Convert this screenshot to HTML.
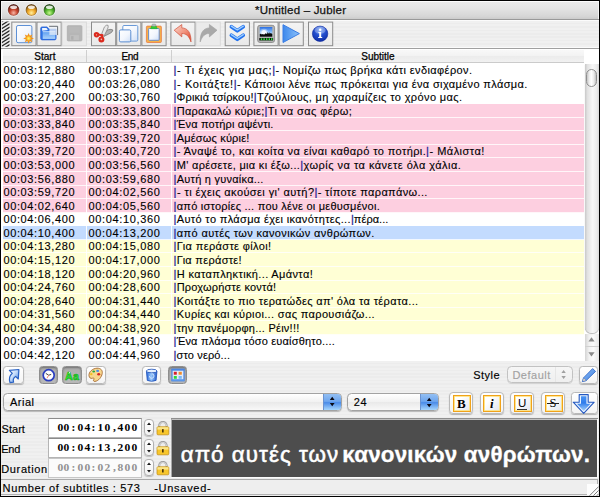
<!DOCTYPE html>
<html>
<head>
<meta charset="utf-8">
<title>Jubler</title>
<style>
html,body{margin:0;padding:0;}
body{width:600px;height:497px;background:#000;overflow:hidden;position:relative;font-family:"Liberation Sans",sans-serif;font-size:11px;color:#000;}
.abs{position:absolute;}
#title{position:absolute;left:1px;top:1.2px;width:598px;height:17.6px;background:linear-gradient(#ebebeb,#e4e4e4 40%,#d6d6d6 85%,#cbcbcb);box-shadow:inset 0 1px 0 #fcfcfc, inset 1px 0 0 #f4f4f4, inset -1px 0 0 #f4f4f4;}
#title .t{position:absolute;left:0.6px;width:598px;top:2.5px;text-align:center;font-size:11.5px;letter-spacing:0.2px;color:#111;-webkit-text-stroke:0.25px #111;}
.tl{position:absolute;top:4.3px;width:11.4px;height:11.4px;border-radius:50%;}
#tbline{position:absolute;left:1px;top:18.6px;width:598px;height:1.2px;background:#999999;}
#toolbar{position:absolute;left:1px;top:20px;width:598px;height:28px;background:repeating-linear-gradient(#f0f0f0 0,#f0f0f0 1.7px,#ececec 1.7px,#ececec 3.4px);border-top:1px solid #fbfbfb;border-bottom:1px solid #fbfbfb;box-sizing:border-box;}
#tbline2{position:absolute;left:1px;top:48px;width:598px;height:1.3px;background:#a0a0a0;}
.tb{position:absolute;top:21.5px;width:24.2px;height:24px;box-sizing:border-box;border:1px solid #8e8e8e;background:linear-gradient(#f6f6f6,#ececec);}
.tb.dis{border-color:#dadada;background:#ececec;}
.tb svg{position:absolute;left:0;top:0;}
#hdr{position:absolute;left:2.8px;top:50.3px;width:581.2px;height:13px;background:linear-gradient(#f8f8f8,#f3f3f3 48%,#ececec 54%,#f1f1f1);border-bottom:1px solid #cbcbcb;box-sizing:border-box;}
#hdr span{-webkit-text-stroke:0.25px #000;position:absolute;top:0.6px;font-size:10px;text-align:center;line-height:12px;}
.hsep{position:absolute;top:50px;width:1px;height:12px;background:#cfcfcf;}
#tablebg{position:absolute;left:1px;top:49px;width:598px;height:311.8px;background:#fff;}
.row{-webkit-text-stroke:0.12px #000;position:absolute;left:2.8px;width:581.2px;box-sizing:border-box;border-bottom:1px solid rgba(255,255,255,.8);font-size:11px;line-height:13px;white-space:nowrap;overflow:hidden;}
.row span.c1,.row span.c2,.row span.c3{position:absolute;top:0.5px;}
.row .c1{left:0.6px;}
.row .c2{left:85.8px;}
.row .c3{left:170.8px;}
.pp{color:#2a2a98;-webkit-text-stroke:0.3px #2a2a98;}
.vsep{position:absolute;top:63.5px;width:1px;height:297.3px;background:#fff;opacity:.9;}
#sb{position:absolute;left:585px;top:63.5px;width:13.6px;height:297px;}
#lower{position:absolute;left:1px;top:360.8px;width:598px;height:118px;background:repeating-linear-gradient(#f0f0f0 0,#f0f0f0 1.7px,#ececec 1.7px,#ececec 3.4px);}
.sbtn{position:absolute;top:366.4px;height:18px;box-sizing:border-box;border:1px solid #b9b9b9;border-radius:3.5px;background:linear-gradient(#ffffff,#f4f4f4);box-shadow:0 1px 1px rgba(0,0,0,.25);}
.sbtn.on{background:linear-gradient(#adadad,#bababa);border-color:#8e8e8e;box-shadow:0 1px 0 rgba(255,255,255,.6), inset 0 1px 2px rgba(0,0,0,.35);}
.sbtn svg{position:absolute;left:-1px;top:-1px;}
.combo{position:absolute;box-sizing:border-box;border:1px solid #a2a2a2;border-radius:4.5px;background:linear-gradient(#ffffff,#f1f1f1 50%,#e9e9e9 52%,#f8f8f8);box-shadow:0 1px 1px rgba(0,0,0,.22);overflow:hidden;}
.combo .lab{position:absolute;left:5.6px;top:1.2px;font-size:11px;letter-spacing:0.5px;line-height:14px;-webkit-text-stroke:0.15px #000;}
.combo .cap{position:absolute;right:0;top:0;bottom:0;width:17px;background:linear-gradient(#93bff3,#6ea6ee 46%,#4a8be8 54%,#a6d6fd);border-left:1px solid #6a92d0;}
.combo .cap.g{background:transparent;border-left:1px solid #e6e6e6;}
.fld{position:absolute;left:47.6px;width:94.2px;height:20.1px;box-sizing:border-box;border:1px solid #b4b4b4;border-top-color:#8b8b8b;background:#fff;font-family:"Liberation Serif",serif;font-weight:bold;font-size:10.2px;line-height:18.4px;text-align:right;padding-right:3.1px;white-space:nowrap;}
.mc{display:inline-block;width:6.76px;text-align:center;transform:scaleX(1.13);}
.lbl{position:absolute;left:0.8px;font-size:11px;line-height:13px;-webkit-text-stroke:0.15px #000;}
#prev{position:absolute;left:172.3px;top:420.3px;width:424.6px;height:56.4px;background:#4d4d4d;}
#prevb{position:absolute;left:170.8px;top:418.2px;width:427px;height:60.3px;background:#fafafa;}
#prevb i{position:absolute;display:block;}
#prev .tx{position:absolute;left:8.4px;top:21.4px;color:#fff;font-size:22.4px;line-height:26px;white-space:nowrap;-webkit-text-stroke:0.3px #fff;}
#status{position:absolute;left:1px;top:478.8px;width:597px;height:16.2px;background:#eeeeee;border-top:1px solid #a9a9a9;border-bottom:1px solid #b2b2b2;border-right:1px solid #b0b0b0;box-sizing:border-box;}
#status span{position:absolute;top:2.4px;font-size:11px;line-height:13px;white-space:nowrap;-webkit-text-stroke:0.15px #000;}
#grip{position:absolute;left:586.6px;top:483.6px;width:11.6px;height:11.6px;background:#fdfdfd;}
</style>
</head>
<body>
<div id="winbg" class="abs" style="left:1px;top:1px;width:598px;height:495px;background:#ececec;"></div>
<div id="title">
<svg class="abs" style="left:0;top:0" width="70" height="18" viewBox="0 0 70 18"><defs><radialGradient id="tl0" cx="0.5" cy="0.78" r="0.75"><stop offset="0" stop-color="#f8b8a8"/><stop offset="0.5" stop-color="#c8452e"/><stop offset="1" stop-color="#6a1c10"/></radialGradient>
<linearGradient id="tr0" x1="0" y1="0" x2="0" y2="1"><stop offset="0" stop-color="#4a1a14"/><stop offset="1" stop-color="#b86a5a"/></linearGradient></defs>
<circle cx="12.6" cy="9.0" r="5.9" fill="url(#tr0)"/><circle cx="12.6" cy="9.2" r="4.9" fill="url(#tl0)"/>
<ellipse cx="12.6" cy="6.3" rx="3.5" ry="1.8" fill="#fff" fill-opacity="0.82"/>
<circle cx="12.6" cy="9.0" r="6.3" fill="none" stroke="#fff" stroke-opacity="0.55" stroke-width="0.8"/><defs><radialGradient id="tl1" cx="0.5" cy="0.78" r="0.75"><stop offset="0" stop-color="#fff0a0"/><stop offset="0.5" stop-color="#f0a828"/><stop offset="1" stop-color="#8a5a10"/></radialGradient>
<linearGradient id="tr1" x1="0" y1="0" x2="0" y2="1"><stop offset="0" stop-color="#5a3a14"/><stop offset="1" stop-color="#c09040"/></linearGradient></defs>
<circle cx="30.4" cy="9.0" r="5.9" fill="url(#tr1)"/><circle cx="30.4" cy="9.2" r="4.9" fill="url(#tl1)"/>
<ellipse cx="30.4" cy="6.3" rx="3.5" ry="1.8" fill="#fff" fill-opacity="0.82"/>
<circle cx="30.4" cy="9.0" r="6.3" fill="none" stroke="#fff" stroke-opacity="0.55" stroke-width="0.8"/><defs><radialGradient id="tl2" cx="0.5" cy="0.78" r="0.75"><stop offset="0" stop-color="#c8f890"/><stop offset="0.5" stop-color="#58b830"/><stop offset="1" stop-color="#1e5a14"/></radialGradient>
<linearGradient id="tr2" x1="0" y1="0" x2="0" y2="1"><stop offset="0" stop-color="#23401a"/><stop offset="1" stop-color="#6aa850"/></linearGradient></defs>
<circle cx="48.4" cy="9.0" r="5.9" fill="url(#tr2)"/><circle cx="48.4" cy="9.2" r="4.9" fill="url(#tl2)"/>
<ellipse cx="48.4" cy="6.3" rx="3.5" ry="1.8" fill="#fff" fill-opacity="0.82"/>
<circle cx="48.4" cy="9.0" r="6.3" fill="none" stroke="#fff" stroke-opacity="0.55" stroke-width="0.8"/></svg>
  <div class="t">*Untitled – Jubler</div>
</div>
<div id="tbline"></div>
<div id="toolbar"></div>
<div id="tbline2"></div>
<svg class="abs" style="left:0;top:19px" width="600" height="30" viewBox="0 0 600 30">
<defs>
<linearGradient id="btn" x1="0" y1="0" x2="0" y2="1"><stop offset="0" stop-color="#f4f4f4"/><stop offset="1" stop-color="#e9e9e9"/></linearGradient>
<linearGradient id="pg" x1="0" y1="0" x2="1" y2="1"><stop offset="0" stop-color="#ffffff"/><stop offset="0.55" stop-color="#f2f6fd"/><stop offset="1" stop-color="#cfdff6"/></linearGradient>
<linearGradient id="fold" x1="0" y1="0" x2="0" y2="1"><stop offset="0" stop-color="#5a9cf0"/><stop offset="1" stop-color="#acd3fb"/></linearGradient>
<linearGradient id="undo" x1="0" y1="0" x2="1" y2="1"><stop offset="0" stop-color="#fbd9cf"/><stop offset="0.55" stop-color="#f08e78"/><stop offset="1" stop-color="#dc3c22"/></linearGradient>
<linearGradient id="chev" x1="0" y1="0" x2="0" y2="1"><stop offset="0" stop-color="#7fbcff"/><stop offset="0.5" stop-color="#2a78f0"/><stop offset="1" stop-color="#1a5fe0"/></linearGradient>
<linearGradient id="play" x1="0" y1="0" x2="1" y2="0"><stop offset="0" stop-color="#3d88ec"/><stop offset="1" stop-color="#8cc2fa"/></linearGradient>
<linearGradient id="sky" x1="0" y1="0" x2="0" y2="1"><stop offset="0" stop-color="#2a6ee4"/><stop offset="0.55" stop-color="#8cc2f8"/><stop offset="1" stop-color="#f4faff"/></linearGradient>
<radialGradient id="info" cx="0.5" cy="0.25" r="0.8"><stop offset="0" stop-color="#7aa6f6"/><stop offset="0.45" stop-color="#2450d0"/><stop offset="1" stop-color="#0c2aa0"/></radialGradient>
<radialGradient id="sun" cx="0.5" cy="0.5" r="0.5"><stop offset="0" stop-color="#fff27a"/><stop offset="0.5" stop-color="#ffd23a"/><stop offset="1" stop-color="#f08a18"/></radialGradient>
</defs>
<clipPath id="hc"><rect x="1.8" y="2.4" width="7.8" height="25.4"/></clipPath><g stroke="#2a2a2a" stroke-width="1.35" clip-path="url(#hc)">
<path d="M1.6 2.70 L9.8 -2.50"/>
<path d="M1.6 6.20 L9.8 1.00"/>
<path d="M1.6 9.70 L9.8 4.50"/>
<path d="M1.6 13.20 L9.8 8.00"/>
<path d="M1.6 16.70 L9.8 11.50"/>
<path d="M1.6 20.20 L9.8 15.00"/>
<path d="M1.6 23.70 L9.8 18.50"/>
<path d="M1.6 27.20 L9.8 22.00"/>
<path d="M1.6 30.70 L9.8 25.50"/>
<path d="M1.6 34.20 L9.8 29.00"/>
</g>

<rect x="11.8" y="3.1000000000000014" width="24.2" height="23.6" fill="url(#btn)" stroke="#8b8b8b" stroke-width="1"/>
<g transform="translate(11.3,2.5000000000000013)"><rect x="5.2" y="4" width="15.4" height="17.2" rx="1.6" fill="url(#pg)" stroke="#5d90d6" stroke-width="1"/>
<g transform="translate(17.3,16.9) scale(1.12)"><path d="M0 -4.8 L1 -2.4 L3.4 -3.4 L2.4 -1 L4.8 0 L2.4 1 L3.4 3.4 L1 2.4 L0 4.8 L-1 2.4 L-3.4 3.4 L-2.4 1 L-4.8 0 L-2.4 -1 L-3.4 -3.4 L-1 -2.4Z" fill="#f3961c"/><circle r="2.5" fill="url(#sun)"/></g></g>
<rect x="37.0" y="3.1000000000000014" width="24.2" height="23.6" fill="url(#btn)" stroke="#8b8b8b" stroke-width="1"/>
<g transform="translate(36.5,2.5000000000000013)"><path d="M4.2 6.8 Q4.2 5.4 5.6 5.4 L10.6 5.4 L12.4 7.6 L19.6 7.6 L19.6 17 Q19.6 18.4 18.2 18.4 L5.6 18.4 Q4.2 18.4 4.2 17Z" fill="#2f74e6" stroke="#2a62d4" stroke-width="0.7"/>
<path d="M5.6 6.6 L10 6.6 L11.4 8.6 L5.6 9.2Z" fill="#eef5ff"/>
<path d="M6.2 9.9 L18.8 9.9 L18.8 17.4 L6.2 17.4Z" fill="url(#fold)"/>
<path d="M6.2 10.2 L18.8 10.2" stroke="#d8eafd" stroke-width="0.8"/>
<rect x="12.9" y="4.9" width="8" height="8.5" fill="#eef2f8" fill-opacity="0.72"/><path d="M12.6 4.8 L21.1 4.8 L21.1 13.6" stroke="#585e66" stroke-width="0.9" fill="none"/></g>
<rect x="62.2" y="3.1000000000000014" width="24.2" height="23.6" fill="#ebebeb" stroke="#dadada" stroke-width="1"/>
<g transform="translate(61.7,2.5000000000000013)"><rect x="5.6" y="4.2" width="14.6" height="15.2" rx="0.8" fill="#b6b6b6" stroke="#adadad" stroke-width="0.8"/><rect x="8.4" y="13.6" width="8.8" height="5" fill="#c0c0c0"/><rect x="9.4" y="14.6" width="2.4" height="3.6" fill="#b0b0b0"/><rect x="7.6" y="5.2" width="10.6" height="6" fill="#b9b9b9"/></g>
<rect x="91.5" y="3.1000000000000014" width="24.2" height="23.6" fill="url(#btn)" stroke="#8b8b8b" stroke-width="1"/>
<g transform="translate(91.0,2.5000000000000013)"><path d="M11.4 12.2 L17.4 8.2 Q20.2 7.4 21.9 8.5 Q21.5 10.8 19 11.9 L12.6 15 Z" fill="#b2b2b2" stroke="#6e6e6e" stroke-width="0.7" stroke-linejoin="round"/>
<path d="M10 14.4 L13.3 5.6 Q15.2 2.9 17 3.7 Q17.7 5.4 16.5 7.5 L12.6 15.6 Z" fill="#e9e9e9" stroke="#7c7c7c" stroke-width="0.7" stroke-linejoin="round"/>
<path d="M7 12.9 L11.4 13.8 M10.7 16 L11.6 13.6" stroke="#dc2a1e" stroke-width="2" stroke-linecap="round"/>
<circle cx="5.5" cy="13.3" r="1.7" fill="#e9c4b6" stroke="#dc2a1e" stroke-width="2.1"/>
<circle cx="10.4" cy="17.9" r="1.9" fill="#e9c4b6" stroke="#dc2a1e" stroke-width="2.2"/></g>
<rect x="116.7" y="3.1000000000000014" width="24.2" height="23.6" fill="url(#btn)" stroke="#8b8b8b" stroke-width="1"/>
<g transform="translate(116.2,2.5000000000000013)"><rect x="6.6" y="4" width="15" height="15.6" rx="1.2" fill="url(#pg)" stroke="#6a9ad8" stroke-width="1"/>
<rect x="3.2" y="8.4" width="11.4" height="12" rx="1.4" fill="url(#pg)" stroke="#5a8cd0" stroke-width="1"/></g>
<rect x="141.9" y="3.1000000000000014" width="24.2" height="23.6" fill="url(#btn)" stroke="#8b8b8b" stroke-width="1"/>
<g transform="translate(141.4,2.5000000000000013)"><rect x="5" y="4.6" width="15" height="16.4" rx="1" fill="#f5b24a" stroke="#e8703a" stroke-width="0.7"/>
<rect x="7.2" y="7" width="10.6" height="11.8" rx="0.8" fill="url(#pg)" stroke="#5a86d0" stroke-width="0.9"/>
<path d="M9.2 7.2 L10.2 4.6 L14.8 4.6 L15.8 7.2Z" fill="#2fd030" stroke="#1ea824" stroke-width="0.5"/>
<rect x="10.6" y="2.6" width="3.8" height="2.2" rx="0.8" fill="#b8c0c0" stroke="#8a9090" stroke-width="0.5"/></g>
<rect x="170.9" y="3.1000000000000014" width="24.2" height="23.6" fill="url(#btn)" stroke="#8b8b8b" stroke-width="1"/>
<g transform="translate(170.4,2.5000000000000013)"><path d="M3.8 8.7 L11.4 3 L11.4 6.4 C17 6.6 20.8 10.6 20.6 20.4 C18.6 14.6 16 12 11.4 12 L11.4 15.4Z" fill="url(#undo)" stroke="#d0503a" stroke-width="0.7" stroke-linejoin="round"/></g>
<rect x="196.1" y="3.1000000000000014" width="24.2" height="23.6" fill="#ebebeb" stroke="#dadada" stroke-width="1"/>
<g transform="translate(195.6,2.5000000000000013)"><path d="M21.4 8.7 L13.8 3 L13.8 6.4 C8.2 6.6 4.4 10.6 4.6 20.4 C6.6 14.6 9.2 12 13.8 12 L13.8 15.4Z" fill="#a9a9a9" stroke="#a0a0a0" stroke-width="0.6" stroke-linejoin="round"/></g>
<rect x="225.2" y="3.1000000000000014" width="24.2" height="23.6" fill="url(#btn)" stroke="#8b8b8b" stroke-width="1"/>
<g transform="translate(224.7,2.5000000000000013)"><path d="M6.7 5.3 L12.6 9.3 L18.5 5.3" stroke="#2472ee" stroke-width="3.7" fill="none" stroke-linecap="round" stroke-linejoin="round"/>
<path d="M6.7 13.8 L12.6 17.8 L18.5 13.8" stroke="#2472ee" stroke-width="3.7" fill="none" stroke-linecap="round" stroke-linejoin="round"/>
<path d="M6.6 4.6 L12.6 8.5 L18.6 4.6" stroke="#9fd0ff" stroke-width="1.3" fill="none" stroke-linecap="round" stroke-linejoin="round"/>
<path d="M6.6 13.1 L12.6 17 L18.6 13.1" stroke="#9fd0ff" stroke-width="1.3" fill="none" stroke-linecap="round" stroke-linejoin="round"/></g>
<rect x="253.9" y="3.1000000000000014" width="24.2" height="23.6" fill="url(#btn)" stroke="#8b8b8b" stroke-width="1"/>
<g transform="translate(253.4,2.5000000000000013)"><rect x="4.2" y="3.8" width="17" height="17.2" rx="2.4" fill="#b4b4b4" stroke="#8a8a8a" stroke-width="0.9"/>
<rect x="6.4" y="5.5" width="12.5" height="9.7" fill="url(#sky)"/>
<circle cx="10.6" cy="11.2" r="2.6" fill="#ffffff" fill-opacity="0.85"/><circle cx="10.6" cy="11.2" r="4" fill="#ffffff" fill-opacity="0.35"/>
<path d="M6.4 15.2 L6.4 12.6 L7.6 12.2 L8.4 12.9 L9.4 12.4 L10.4 13.1 L11.4 12.7 L12 11.4 L12.6 12.6 L13.4 12.2 L13.9 10.2 L14.4 12.2 L15.2 11.8 L15.9 10.8 L16.4 12.2 L17.4 11.6 L18.9 12.4 L18.9 15.2Z" fill="#0a0a0a"/>
<rect x="5.9" y="16.4" width="13.8" height="2.7" rx="0.6" fill="#121212"/>
<path d="M7.4 17.75 h1.4 M10 17.75 h1.4 M12.6 17.75 h1.4 M15.2 17.75 h1.4 M17.6 17.75 h1.4" stroke="#30e83c" stroke-width="2"/></g>
<rect x="279.1" y="3.1000000000000014" width="24.2" height="23.6" fill="url(#btn)" stroke="#8b8b8b" stroke-width="1"/>
<g transform="translate(278.6,2.5000000000000013)"><path d="M4.4 3.2 L4.4 21 L20.8 12.1Z" fill="url(#play)" stroke="#3a7de4" stroke-width="1" stroke-linejoin="round"/></g>
<rect x="308.5" y="3.1000000000000014" width="24.2" height="23.6" fill="url(#btn)" stroke="#8b8b8b" stroke-width="1"/>
<g transform="translate(308.0,2.5000000000000013)"><circle cx="12.1" cy="12.3" r="7.7" fill="url(#info)" stroke="#0a279c" stroke-width="0.6"/>
<ellipse cx="12.1" cy="8.6" rx="5.6" ry="3.6" fill="#ffffff" fill-opacity="0.28"/>
<circle cx="12.2" cy="8.2" r="1.25" fill="#fff"/><path d="M10.4 10.6 L13.2 10.6 L13.2 15.6 L14.2 15.6 L14.2 16.6 L10.2 16.6 L10.2 15.6 L11.2 15.6 L11.2 11.6 L10.4 11.6Z" fill="#fff"/></g>
</svg>
<div id="tablebg"></div>
<div id="hdr">
  <span style="left:-0.4px;width:85px;">Start</span>
  <span style="left:84.6px;width:85px;letter-spacing:-0.4px;">End</span>
  <span style="left:169.2px;width:412px;">Subtitle</span>
</div>
<div class="hsep" style="left:86px;"></div>
<div class="hsep" style="left:171px;"></div>
<div class="row" style="top:63.50px;height:13.57px;background:#ffffff"><span class="c1" style="letter-spacing:0.633px">00:03:12,880</span><span class="c2" style="letter-spacing:0.633px">00:03:17,200</span><span class="c3"><span class="sa" style="letter-spacing:0.630px"><span class="pp">|</span>- Τι έχεις για μας;</span><span class="sb" style="letter-spacing:0.397px"><span class="pp">|</span>- Νομίζω πως βρήκα κάτι ενδιαφέρον.</span></span></div>
<div class="row" style="top:77.07px;height:13.57px;background:#ffffff"><span class="c1" style="letter-spacing:0.633px">00:03:20,440</span><span class="c2" style="letter-spacing:0.633px">00:03:26,080</span><span class="c3"><span class="sa" style="letter-spacing:0.581px"><span class="pp">|</span>- Κοιτάξτε!</span><span class="sb" style="letter-spacing:0.374px"><span class="pp">|</span>- Κάποιοι λένε πως πρόκειται για ένα σιχαμένο πλάσμα.</span></span></div>
<div class="row" style="top:90.64px;height:13.57px;background:#ffffff"><span class="c1" style="letter-spacing:0.633px">00:03:27,200</span><span class="c2" style="letter-spacing:0.633px">00:03:30,760</span><span class="c3"><span class="sa" style="letter-spacing:0.135px"><span class="pp">|</span>Φρικιά τσίρκου!</span><span class="sb" style="letter-spacing:0.380px"><span class="pp">|</span>Τζούλιους, μη χαραμίζεις το χρόνο μας.</span></span></div>
<div class="row" style="top:104.21px;height:13.57px;background:#fdcfe0"><span class="c1" style="letter-spacing:0.633px">00:03:31,840</span><span class="c2" style="letter-spacing:0.633px">00:03:33,800</span><span class="c3"><span class="sa" style="letter-spacing:0.264px"><span class="pp">|</span>Παρακαλώ κύριε;</span><span class="sb" style="letter-spacing:0.418px"><span class="pp">|</span>Τι να σας φέρω;</span></span></div>
<div class="row" style="top:117.78px;height:13.57px;background:#fdcfe0"><span class="c1" style="letter-spacing:0.633px">00:03:33,840</span><span class="c2" style="letter-spacing:0.633px">00:03:35,840</span><span class="c3"><span class="sa" style="letter-spacing:0.185px"><span class="pp">|</span>Ένα ποτήρι αψέντι.</span></span></div>
<div class="row" style="top:131.35px;height:13.57px;background:#fdcfe0"><span class="c1" style="letter-spacing:0.633px">00:03:35,880</span><span class="c2" style="letter-spacing:0.633px">00:03:39,720</span><span class="c3"><span class="sa" style="letter-spacing:0.180px"><span class="pp">|</span>Αμέσως κύριε!</span></span></div>
<div class="row" style="top:144.92px;height:13.57px;background:#fdcfe0"><span class="c1" style="letter-spacing:0.633px">00:03:39,720</span><span class="c2" style="letter-spacing:0.633px">00:03:40,720</span><span class="c3"><span class="sa" style="letter-spacing:0.394px"><span class="pp">|</span>- Άναψέ το, και κοίτα να είναι καθαρό το ποτήρι.</span><span class="sb" style="letter-spacing:0.485px"><span class="pp">|</span>- Μάλιστα!</span></span></div>
<div class="row" style="top:158.49px;height:13.57px;background:#fdcfe0"><span class="c1" style="letter-spacing:0.633px">00:03:53,000</span><span class="c2" style="letter-spacing:0.633px">00:03:56,560</span><span class="c3"><span class="sa" style="letter-spacing:0.310px"><span class="pp">|</span>Μ' αρέσετε, μια κι έξω...</span><span class="sb" style="letter-spacing:0.479px"><span class="pp">|</span>χωρίς να τα κάνετε όλα χάλια.</span></span></div>
<div class="row" style="top:172.06px;height:13.57px;background:#fdcfe0"><span class="c1" style="letter-spacing:0.633px">00:03:56,880</span><span class="c2" style="letter-spacing:0.633px">00:03:59,680</span><span class="c3"><span class="sa" style="letter-spacing:0.246px"><span class="pp">|</span>Αυτή η γυναίκα...</span></span></div>
<div class="row" style="top:185.63px;height:13.57px;background:#fdcfe0"><span class="c1" style="letter-spacing:0.633px">00:03:59,720</span><span class="c2" style="letter-spacing:0.633px">00:04:02,560</span><span class="c3"><span class="sa" style="letter-spacing:0.410px"><span class="pp">|</span>- τι έχεις ακούσει γι' αυτή?</span><span class="sb" style="letter-spacing:0.373px"><span class="pp">|</span>- τίποτε παραπάνω...</span></span></div>
<div class="row" style="top:199.20px;height:13.57px;background:#fdcfe0"><span class="c1" style="letter-spacing:0.633px">00:04:02,640</span><span class="c2" style="letter-spacing:0.633px">00:04:05,560</span><span class="c3"><span class="sa" style="letter-spacing:0.244px"><span class="pp">|</span>από ιστορίες ... που λένε οι μεθυσμένοι.</span></span></div>
<div class="row" style="top:212.77px;height:13.57px;background:#ffffff"><span class="c1" style="letter-spacing:0.633px">00:04:06,400</span><span class="c2" style="letter-spacing:0.633px">00:04:10,360</span><span class="c3"><span class="sa" style="letter-spacing:0.337px"><span class="pp">|</span>Αυτό το πλάσμα έχει ικανότητες...</span><span class="sb" style="letter-spacing:0.051px"><span class="pp">|</span>πέρα...</span></span></div>
<div class="row" style="top:226.34px;height:13.57px;background:#c3dbfe"><span class="c1" style="letter-spacing:0.633px">00:04:10,400</span><span class="c2" style="letter-spacing:0.633px">00:04:13,200</span><span class="c3"><span class="sa" style="letter-spacing:0.374px"><span class="pp">|</span>από αυτές των κανονικών ανθρώπων.</span></span></div>
<div class="row" style="top:239.91px;height:13.57px;background:#ffffd5"><span class="c1" style="letter-spacing:0.633px">00:04:13,280</span><span class="c2" style="letter-spacing:0.633px">00:04:15,080</span><span class="c3"><span class="sa" style="letter-spacing:0.359px"><span class="pp">|</span>Για περάστε φίλοι!</span></span></div>
<div class="row" style="top:253.48px;height:13.57px;background:#ffffd5"><span class="c1" style="letter-spacing:0.633px">00:04:15,120</span><span class="c2" style="letter-spacing:0.633px">00:04:17,000</span><span class="c3"><span class="sa" style="letter-spacing:0.290px"><span class="pp">|</span>Για περάστε!</span></span></div>
<div class="row" style="top:267.05px;height:13.57px;background:#ffffd5"><span class="c1" style="letter-spacing:0.633px">00:04:18,120</span><span class="c2" style="letter-spacing:0.633px">00:04:20,960</span><span class="c3"><span class="sa" style="letter-spacing:0.363px"><span class="pp">|</span>Η καταπληκτική... Αμάντα!</span></span></div>
<div class="row" style="top:280.62px;height:13.57px;background:#ffffd5"><span class="c1" style="letter-spacing:0.633px">00:04:24,760</span><span class="c2" style="letter-spacing:0.633px">00:04:28,600</span><span class="c3"><span class="sa" style="letter-spacing:0.205px"><span class="pp">|</span>Προχωρήστε κοντά!</span></span></div>
<div class="row" style="top:294.19px;height:13.57px;background:#ffffd5"><span class="c1" style="letter-spacing:0.633px">00:04:28,640</span><span class="c2" style="letter-spacing:0.633px">00:04:31,440</span><span class="c3"><span class="sa" style="letter-spacing:0.360px"><span class="pp">|</span>Κοιτάξτε το πιο τερατώδες απ' όλα τα τέρατα...</span></span></div>
<div class="row" style="top:307.76px;height:13.57px;background:#ffffd5"><span class="c1" style="letter-spacing:0.633px">00:04:31,560</span><span class="c2" style="letter-spacing:0.633px">00:04:34,440</span><span class="c3"><span class="sa" style="letter-spacing:0.356px"><span class="pp">|</span>Κυρίες και κύριοι... σας παρουσιάζω...</span></span></div>
<div class="row" style="top:321.33px;height:13.57px;background:#ffffd5"><span class="c1" style="letter-spacing:0.633px">00:04:34,480</span><span class="c2" style="letter-spacing:0.633px">00:04:38,920</span><span class="c3"><span class="sa" style="letter-spacing:0.253px"><span class="pp">|</span>την πανέμορφη... Ρέιν!!!</span></span></div>
<div class="row" style="top:334.90px;height:13.57px;background:#ffffff"><span class="c1" style="letter-spacing:0.633px">00:04:39,200</span><span class="c2" style="letter-spacing:0.633px">00:04:41,960</span><span class="c3"><span class="sa" style="letter-spacing:0.178px"><span class="pp">|</span>Ένα πλάσμα τόσο ευαίσθητο....</span></span></div>
<div class="row" style="top:348.47px;height:13.57px;background:#ffffff"><span class="c1" style="letter-spacing:0.633px">00:04:42,120</span><span class="c2" style="letter-spacing:0.633px">00:04:44,960</span><span class="c3"><span class="sa" style="letter-spacing:0.130px"><span class="pp">|</span>στο νερό...</span></span></div>
<div class="vsep" style="left:86px;"></div>
<div class="vsep" style="left:171px;"></div>
<div id="sb">
  <div class="abs" style="left:0;top:0;width:13.6px;height:270px;background:linear-gradient(90deg,#cfcfcf,#e4e4e4 15%,#f6f6f6 50%,#ededed 80%,#dcdcdc);border-radius:0 0 6px 6px;"></div>
  <div class="abs" style="left:0;top:270px;width:13.6px;height:27px;background:linear-gradient(90deg,#d4d4d4,#f2f2f2 30%,#fafafa 60%,#e6e6e6);"></div>
  <div class="abs" style="left:0;top:0;width:13.6px;height:269.5px;border-radius:0 0 6.5px 6.5px;background:linear-gradient(90deg,#c9c9c9,#e2e2e2 18%,#f7f7f7 55%,#eaeaea 85%,#d9d9d9);box-shadow:0 1px 1px rgba(0,0,0,.25);"></div>
  <div class="abs" style="left:0.6px;top:5.4px;width:11.4px;height:17.8px;box-sizing:border-box;border:1.4px solid #8f8f8f;border-radius:5.7px;background:linear-gradient(90deg,#c6c6c6,#f2f2f2 30%,#fdfdfd 50%,#ebebeb 75%,#c0c0c0);"></div>
  <div class="abs" style="left:0;top:282.5px;width:13.6px;height:1px;background:#d0d0d0;"></div>
  <svg class="abs" style="left:0;top:270px" width="14" height="27" viewBox="0 0 14 27"><path d="M6.5 3.2 L9.6 7.6 L3.4 7.6Z" fill="#8a8a8a"/><path d="M6.5 22.6 L9.6 18.2 L3.4 18.2Z" fill="#8a8a8a"/></svg>
</div>
<div id="lower"></div>
<div class="sbtn" style="left:3.3px;top:366.4px;width:20.6px;height:18px;"><svg width="20.6" height="18" viewBox="0 0 20.6 18"><defs><linearGradient id="gA" x1="0" y1="0" x2="1" y2="1"><stop offset="0" stop-color="#ffffff"/><stop offset="0.45" stop-color="#c4dcfa"/><stop offset="1" stop-color="#2f74dc"/></linearGradient></defs>
<path transform="translate(0,0.1)" d="M6.4 4.3 L15.9 3.4 L15.3 12.9 L12.6 10.3 C10.5 11.5 9.8 13.5 10.6 16 L7 16.5 C5.7 12.1 7.1 8.9 9.3 7.2 Z" fill="url(#gA)" stroke="#2a62c4" stroke-width="1.2" stroke-linejoin="round"/></svg></div>
<div class="sbtn on" style="left:38.8px;top:366.4px;width:19.6px;height:18px;"><svg width="19.6" height="18" viewBox="0 0 19.6 18"><circle cx="9.7" cy="9.2" r="5.5" fill="#fdfdfd" stroke="#2a3ec0" stroke-width="1.7"/><path d="M9.7 9.2 L6.8 7.4 M9.7 9.2 L12.2 8.4" stroke="#333" stroke-width="0.9" fill="none"/><path d="M9.7 9.2 L8 12.2" stroke="#f06a4a" stroke-width="0.8"/></svg></div>
<div class="sbtn on" style="left:62.3px;top:366.4px;width:19.4px;height:18px;"><svg width="19.4" height="18" viewBox="0 0 19.4 18"><text x="3.1" y="14.5" font-family="Liberation Sans" font-weight="bold" font-size="10.6" fill="#2af02e" stroke="#11a51a" stroke-width="0.55" letter-spacing="0.2">Aa</text><path d="M7.1 7.5 L7.8 5.9" stroke="#e8ffe8" stroke-width="0.9"/></svg></div>
<div class="sbtn" style="left:86.2px;top:366.4px;width:19.8px;height:18px;"><svg width="19.8" height="18" viewBox="0 0 19.8 18"><path d="M3 9.6 C2.6 6 6.5 2.4 11 2.2 C15 2 16.8 4.6 16.2 7.6 C15.6 11 12.6 15 9 15.4 C7.6 15.6 7 14.6 7.8 13.6 C8.6 12.6 7.6 11.6 6.4 12.2 C4.6 13 3.2 11.6 3 9.6Z" fill="#f7d78e" stroke="#a5662c" stroke-width="0.9"/>
<ellipse cx="7.7" cy="5.5" rx="1.4" ry="1.1" fill="#2aa83a"/><ellipse cx="11.6" cy="4.9" rx="1.5" ry="1.1" fill="#4a90e8"/><ellipse cx="12.7" cy="8.3" rx="1.5" ry="1.2" fill="#d8281e"/><ellipse cx="5.3" cy="8.2" rx="1.2" ry="1.1" fill="#f0c020"/></svg></div>
<div class="sbtn" style="left:142px;top:366.4px;width:19.2px;height:18px;"><svg width="19.2" height="18" viewBox="0 0 19.2 18"><defs><linearGradient id="gT" x1="0" y1="0" x2="1" y2="0"><stop offset="0" stop-color="#2563d6"/><stop offset="0.45" stop-color="#9ccbfc"/><stop offset="1" stop-color="#1f58c8"/></linearGradient></defs>
<path d="M4.4 5 L15 5 L14.1 14.4 Q9.7 16.2 5.3 14.4Z" fill="url(#gT)" stroke="#1c4fb8" stroke-width="0.8"/><ellipse cx="9.7" cy="5" rx="5.3" ry="1.8" fill="#e6f1fe" stroke="#1c4fb8" stroke-width="0.8"/><path d="M7.4 10 a2.3 2.3 0 1 0 2.3 -2.3" fill="none" stroke="#d8eaff" stroke-width="0.9"/></svg></div>
<div class="sbtn on" style="left:167.5px;top:366.4px;width:19.6px;height:18px;"><svg width="19.6" height="18" viewBox="0 0 19.6 18"><rect x="4" y="3.3" width="12" height="11.4" fill="#e4ecf8" stroke="#3c78dc" stroke-width="1.1"/><rect x="3.5" y="2.8" width="13" height="1.9" fill="#4a86e4"/><rect x="3.5" y="13.2" width="13" height="2" fill="#5a96ea"/>
<rect x="5.8" y="5.8" width="3" height="2.9" fill="#d8202a"/><rect x="10.6" y="5.8" width="3.2" height="2.9" fill="#f08a2a"/><rect x="5.8" y="10" width="3" height="2.8" fill="#2fd83a"/><rect x="10.6" y="10" width="3.2" height="2.8" fill="#7ab8f4"/></svg></div>
<div class="abs" style="left:473.2px;top:368.6px;font-size:11px;letter-spacing:0.5px;line-height:13px;-webkit-text-stroke:0.15px #000;">Style</div>
<div class="combo" style="left:506.6px;top:366.2px;width:66.8px;height:16.6px;border-color:#c2c2c2;box-shadow:0 1px 0 rgba(0,0,0,.10);background:linear-gradient(#f6f6f6,#efefef);">
<div class="lab" style="left:4.8px;top:0.8px;color:#a2a2a2;-webkit-text-stroke:0.15px #a2a2a2;">Default</div><div class="cap g" style="width:16px;"></div>
<svg class="abs" style="right:0;top:0" width="17" height="15" viewBox="0 0 17 15"><path d="M8.6 3 L10.8 6 L6.4 6Z M8.6 12 L10.8 9 L6.4 9Z" fill="#a0a0a0"/></svg></div>
<div class="sbtn" style="left:578.6px;top:366.2px;width:19.6px;height:18.2px;"><svg width="19.6" height="18.2" viewBox="0 0 19.6 18.2"><defs><linearGradient id="gP" x1="0" y1="0" x2="1" y2="1"><stop offset="0" stop-color="#9cc8fa"/><stop offset="1" stop-color="#2f74dc"/></linearGradient></defs>
<path d="M13.6 2.6 L16.6 5.4 L7.2 14.6 L3.4 15.6 L4.6 11.8Z" fill="url(#gP)" stroke="#2a62c4" stroke-width="0.8" stroke-linejoin="round"/><path d="M4.6 11.8 L7.2 14.6 L3.4 15.6Z" fill="#f4e2c0" stroke="#2a62c4" stroke-width="0.5"/></svg></div>
<div class="combo" style="left:3.4px;top:393.2px;width:338.2px;height:17.4px;"><div class="lab">Arial</div><div class="cap" style="width:16.6px"></div>
<svg class="abs" style="right:0;top:0" width="18" height="15" viewBox="0 0 18 15"><path d="M9.2 2.8 L11.6 6 L6.8 6Z M9.2 12.2 L11.6 9 L6.8 9Z" fill="#0a0a14"/></svg></div>
<div class="combo" style="left:347px;top:393.2px;width:92.2px;height:17.4px;"><div class="lab" style="left:5.8px;">24</div><div class="cap" style="width:17.6px;"></div>
<svg class="abs" style="right:0px;top:0.4px" width="18" height="15" viewBox="0 0 18 15"><path d="M9.2 2.8 L11.6 6 L6.8 6Z M9.2 12.2 L11.6 9 L6.8 9Z" fill="#0a0a14"/></svg></div>
<div class="sbtn" style="left:449.2px;top:392px;width:24.2px;height:22px;border-radius:4px;">
<div class="abs" style="left:2.6px;top:1.6px;width:18.0px;height:17.6px;box-sizing:border-box;border:1.8px solid #f0a21a;background:linear-gradient(135deg,#ffffff 30%,#dfe5f0);box-shadow:inset 0 0 0 0.8px #ffe070;"></div><div class="abs" style="left:0;width:22.4px;top:3.6px;text-align:center;font-family:'Liberation Serif',serif;font-weight:bold;font-size:13px;line-height:14px;">B</div></div>
<div class="sbtn" style="left:479.6px;top:392px;width:24.4px;height:22px;border-radius:4px;">
<div class="abs" style="left:2.6px;top:1.6px;width:18.2px;height:17.6px;box-sizing:border-box;border:1.8px solid #f0a21a;background:linear-gradient(135deg,#ffffff 30%,#dfe5f0);box-shadow:inset 0 0 0 0.8px #ffe070;"></div><div class="abs" style="left:0;width:22.4px;top:3.6px;text-align:center;font-family:'Liberation Serif',serif;font-weight:bold;font-style:italic;font-size:13px;line-height:14px;">i</div></div>
<div class="sbtn" style="left:510px;top:392px;width:24.2px;height:22px;border-radius:4px;">
<div class="abs" style="left:2.6px;top:1.6px;width:18.0px;height:17.6px;box-sizing:border-box;border:1.8px solid #f0a21a;background:linear-gradient(135deg,#ffffff 30%,#dfe5f0);box-shadow:inset 0 0 0 0.8px #ffe070;"></div><div class="abs" style="left:0;width:22.2px;top:2.8px;text-align:center;font-family:'Liberation Sans',sans-serif;font-size:11.5px;line-height:14px;">U</div><div class="abs" style="left:6.4px;top:15.6px;width:9.6px;height:1px;background:#333;"></div></div>
<div class="sbtn" style="left:541px;top:392px;width:24.2px;height:22px;border-radius:4px;">
<div class="abs" style="left:2.6px;top:1.6px;width:18.0px;height:17.6px;box-sizing:border-box;border:1.8px solid #f0a21a;background:linear-gradient(135deg,#ffffff 30%,#dfe5f0);box-shadow:inset 0 0 0 0.8px #ffe070;"></div><div class="abs" style="left:0;width:22.2px;top:3.4px;text-align:center;font-family:'Liberation Serif',serif;font-size:12.5px;line-height:14px;">S</div><div class="abs" style="left:5.4px;top:10.2px;width:11.6px;height:1px;background:#222;"></div></div>
<div class="sbtn" style="left:571.4px;top:392px;width:26.6px;height:22px;"><svg width="26.6" height="22" viewBox="0 0 26.6 22"><defs><linearGradient id="gD" x1="0" y1="0" x2="0" y2="1"><stop offset="0" stop-color="#4a94f2"/><stop offset="0.45" stop-color="#2f7cec"/><stop offset="1" stop-color="#a8d4fc"/></linearGradient></defs>
<path d="M8.2 2.6 L17.2 2.6 L17.2 10.2 L23.2 10.2 L12.7 21.4 L2.2 10.2 L8.2 10.2Z" fill="#eaf3fe" stroke="#2458c0" stroke-width="1.1" stroke-linejoin="round"/>
<path d="M10 4.2 L15.4 4.2 L15.4 11.8 L19.4 11.8 L12.7 19 L6 11.8 L10 11.8Z" fill="url(#gD)"/></svg></div>
<div class="lbl" style="top:422.8px;letter-spacing:0.05px;left:1.5px;">Start</div>
<div class="fld" style="top:418.4px;"><span class="mc">0</span><span class="mc">0</span><span class="mc">:</span><span class="mc">0</span><span class="mc">4</span><span class="mc">:</span><span class="mc">1</span><span class="mc">0</span><span class="mc">,</span><span class="mc">4</span><span class="mc">0</span><span class="mc">0</span></div>
<div class="abs" style="left:143.6px;top:419.2px;width:10px;height:17.2px;box-sizing:border-box;border:1px solid #b0b0b0;border-radius:4px;background:linear-gradient(#fff,#f1f1f1);box-shadow:0 1px 1px rgba(0,0,0,.2);"></div>
<svg class="abs" style="left:143.6px;top:419.2px" width="10" height="17" viewBox="0 0 10 17"><path d="M5 3.4 L7 6 L3 6Z M5 13.6 L7 11 L3 11Z" fill="#1a1a1a"/></svg>
<svg class="abs" style="left:156px;top:421.0px" width="14" height="15" viewBox="0 0 14 15">
<path d="M3.2 6.4 L3.2 4.6 A3.7 3.7 0 0 1 10.6 4.6 L10.6 6.4" fill="none" stroke="#9c9c9c" stroke-width="2"/>
<path d="M3.2 5 A3.7 3.7 0 0 1 10.6 5" fill="none" stroke="#e4e4e4" stroke-width="0.8"/>
<rect x="1" y="5.8" width="11.8" height="8" rx="1" fill="#f7c62c" stroke="#c08a10" stroke-width="0.7"/>
<rect x="1.4" y="6.2" width="11" height="2.4" fill="#fbe58a"/>
<rect x="6.1" y="8" width="1.5" height="3.6" rx="0.6" fill="#3a2608"/></svg>
<div class="lbl" style="top:442.8px;letter-spacing:-0.3px;left:1.3px;">End</div>
<div class="fld" style="top:438.4px;"><span class="mc">0</span><span class="mc">0</span><span class="mc">:</span><span class="mc">0</span><span class="mc">4</span><span class="mc">:</span><span class="mc">1</span><span class="mc">3</span><span class="mc">,</span><span class="mc">2</span><span class="mc">0</span><span class="mc">0</span></div>
<div class="abs" style="left:143.6px;top:439.2px;width:10px;height:17.2px;box-sizing:border-box;border:1px solid #b0b0b0;border-radius:4px;background:linear-gradient(#fff,#f1f1f1);box-shadow:0 1px 1px rgba(0,0,0,.2);"></div>
<svg class="abs" style="left:143.6px;top:439.2px" width="10" height="17" viewBox="0 0 10 17"><path d="M5 3.4 L7 6 L3 6Z M5 13.6 L7 11 L3 11Z" fill="#1a1a1a"/></svg>
<svg class="abs" style="left:156px;top:441.0px" width="14" height="15" viewBox="0 0 14 15">
<path d="M3.2 6.4 L3.2 4.6 A3.7 3.7 0 0 1 10.6 4.6 L10.6 6.4" fill="none" stroke="#9c9c9c" stroke-width="2"/>
<path d="M3.2 5 A3.7 3.7 0 0 1 10.6 5" fill="none" stroke="#e4e4e4" stroke-width="0.8"/>
<rect x="1" y="5.8" width="11.8" height="8" rx="1" fill="#f7c62c" stroke="#c08a10" stroke-width="0.7"/>
<rect x="1.4" y="6.2" width="11" height="2.4" fill="#fbe58a"/>
<rect x="6.1" y="8" width="1.5" height="3.6" rx="0.6" fill="#3a2608"/></svg>
<div class="lbl" style="top:462.8px;letter-spacing:0.62px;left:1.3px;">Duration</div>
<div class="fld" style="top:458.4px;color:#909090;background:#fbfbfb;border-color:#c6c6c6;"><span class="mc">0</span><span class="mc">0</span><span class="mc">:</span><span class="mc">0</span><span class="mc">0</span><span class="mc">:</span><span class="mc">0</span><span class="mc">2</span><span class="mc">,</span><span class="mc">8</span><span class="mc">0</span><span class="mc">0</span></div>
<div class="abs" style="left:143.6px;top:459.2px;width:10px;height:17.2px;box-sizing:border-box;border:1px solid #b0b0b0;border-radius:4px;background:linear-gradient(#fff,#f1f1f1);box-shadow:0 1px 1px rgba(0,0,0,.2);"></div>
<svg class="abs" style="left:143.6px;top:459.2px" width="10" height="17" viewBox="0 0 10 17"><path d="M5 3.4 L7 6 L3 6Z M5 13.6 L7 11 L3 11Z" fill="#1a1a1a"/></svg>
<svg class="abs" style="left:156px;top:461.0px" width="14" height="15" viewBox="0 0 14 15">
<path d="M3.2 6.4 L3.2 4.6 A3.7 3.7 0 0 1 10.6 4.6 L10.6 6.4" fill="none" stroke="#9c9c9c" stroke-width="2"/>
<path d="M3.2 5 A3.7 3.7 0 0 1 10.6 5" fill="none" stroke="#e4e4e4" stroke-width="0.8"/>
<rect x="1" y="5.8" width="11.8" height="8" rx="1" fill="#f7c62c" stroke="#c08a10" stroke-width="0.7"/>
<rect x="1.4" y="6.2" width="11" height="2.4" fill="#fbe58a"/>
<rect x="6.1" y="8" width="1.5" height="3.6" rx="0.6" fill="#3a2608"/></svg>
<div id="prevb"><i style="left:0.7px;top:0;width:426.3px;height:1px;background:#8e8e8e"></i><i style="left:0.7px;top:1px;width:425.6px;height:1.1px;background:#c0c0c0"></i><i style="left:0.7px;top:1px;width:0.8px;height:57.5px;background:#a8a8a8"></i></div>
<div id="prev"><div class="tx"><span id="pr" style="letter-spacing:1.02px;-webkit-text-stroke:0.55px #fff">από αυτές των</span><b id="pb" style="position:absolute;left:161.6px;top:0;letter-spacing:0.19px">κανονικών ανθρώπων.</b></div></div>
<div id="status"><span id="st1" style="left:1.6px;letter-spacing:0.62px;">Number of subtitles : 573</span><span id="st2" style="left:153.2px;letter-spacing:0.72px;">-Unsaved-</span></div>
<div id="grip"><svg width="12" height="12" viewBox="0 0 12 12" style="position:absolute;left:0;top:0"><path d="M2.6 11.6 L11.6 2.6 M6.4 11.6 L11.6 6.4 M9.8 11.6 L11.6 9.8" stroke="#7c7c7c" stroke-width="1" fill="none"/></svg></div>
</body>
</html>
